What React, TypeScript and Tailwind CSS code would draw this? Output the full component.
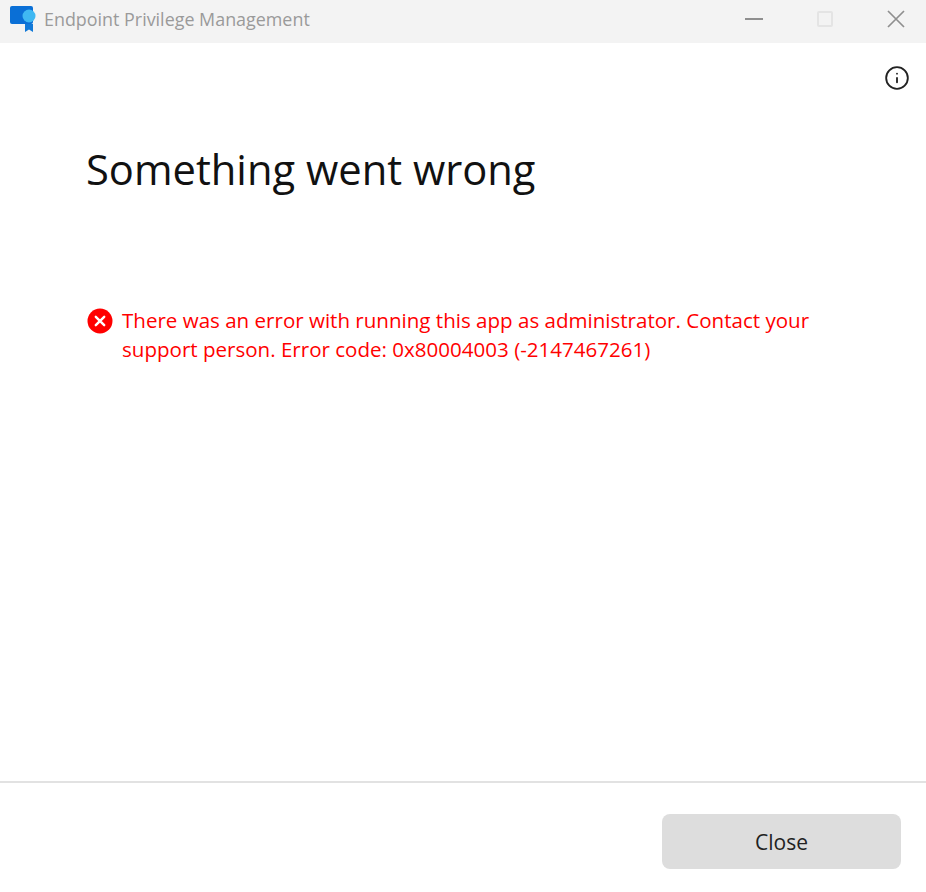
import { Info } from "lucide-react";

function AppIcon() {
  return (
    <svg width="26" height="28" viewBox="0 0 26 28" className="shrink-0">
      <rect x="0" y="1" width="23" height="18" rx="2" fill="#0a6fd6" />
      <path d="M15 19l0 8 4-2.6 4 2.6 0-8z" fill="#1179d8" />
      <circle cx="19" cy="11" r="6.5" fill="#3fb8f2" />
    </svg>
  );
}

function ErrorIcon() {
  return (
    <svg width="26" height="26" viewBox="0 0 26 26" className="shrink-0">
      <circle cx="13" cy="13" r="12.5" fill="#ff0000" />
      <path d="M8.8 8.8l8.4 8.4M17.2 8.8l-8.4 8.4" stroke="#ffffff" strokeWidth="2.4" strokeLinecap="round" />
    </svg>
  );
}

export default function App() {
  return (
    <div className="flex h-[892px] w-[926px] flex-col overflow-hidden bg-white font-['Open_Sans','Noto_Sans',sans-serif]">
      <div className="flex h-[43px] shrink-0 items-center justify-between bg-[#f3f3f3] pb-[5px] pl-[10px] pr-[21px]">
        <div className="flex items-center gap-2">
          <AppIcon />
          <span className="text-[17.9px] text-[#9a9a9a]">Endpoint Privilege Management</span>
        </div>
        <div className="flex items-center gap-[54px]">
          <div className="h-[2px] w-[18px] bg-[#8f8f8f]" />
          <div className="h-[16px] w-[16px] rounded-[2px] border-2 border-[#e4e4e4]" />
          <svg width="18" height="18" viewBox="0 0 18 18">
            <path d="M1 1l16 16M17 1L1 17" stroke="#8f8f8f" strokeWidth="1.7" />
          </svg>
        </div>
      </div>

      <div className="flex flex-1 flex-col">
        <div className="flex justify-end pr-[16px] pt-[22px]">
          <Info size={26} strokeWidth={1.7} className="text-[#222222]" />
        </div>
        <div className="pl-[86px] pt-[50px]">
          <h1 className="text-[41.7px] leading-[56px] text-[#111111]">Something went wrong</h1>
          <div className="ml-[1px] mt-[109px] flex items-start gap-[9px]">
            <div className="pt-[2px]">
              <ErrorIcon />
            </div>
            <p className="w-[720px] text-[20.55px] leading-[29px] text-[#ff0000]">
              There was an error with running this app as administrator. Contact your support person. Error code:
              0x80004003 (-2147467261)
            </p>
          </div>
        </div>
      </div>

      <div className="flex h-[111px] shrink-0 items-start justify-end border-t-2 border-[#e2e2e2] pr-[25px] pt-[31px]">
        <button type="button" className="h-[55px] w-[239px] rounded-[8px] bg-[#dddddd] pt-[2px] text-[21px] text-[#222222]">
          Close
        </button>
      </div>
    </div>
  );
}
